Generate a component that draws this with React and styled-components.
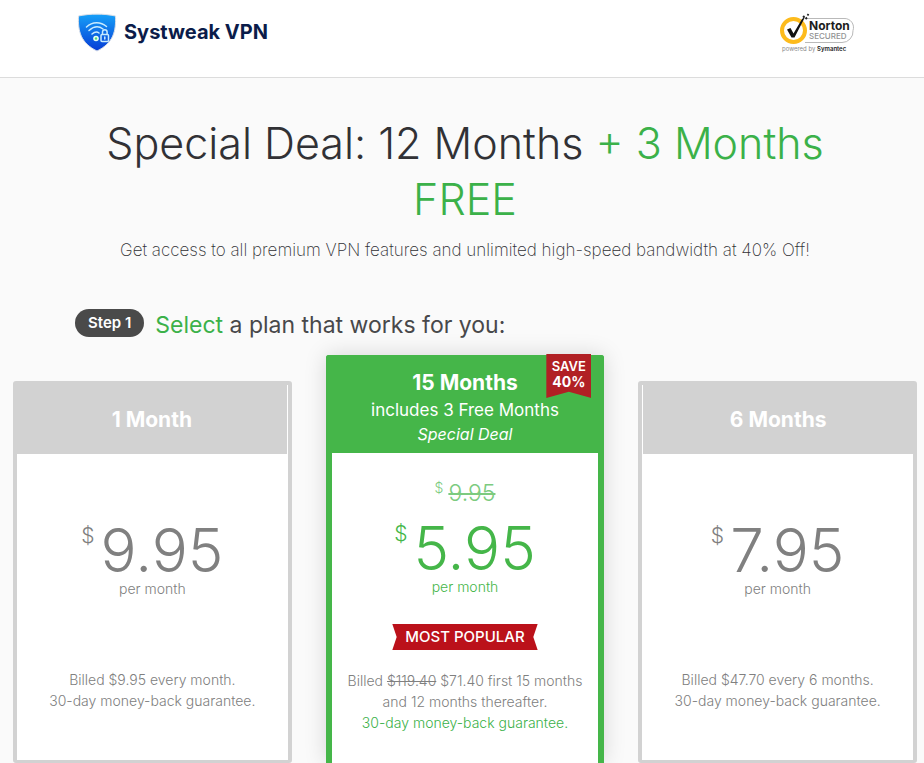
import React from "react";
import styled, { createGlobalStyle, css } from "styled-components";

const GlobalStyle = createGlobalStyle`
  *, *::before, *::after { box-sizing: border-box; }
  body {
    margin: 0;
    background: #fafafa;
    color: #313135;
    font-family: Inter, "Open Sans", sans-serif;
  }
  h1, h2, h3, p { margin: 0; }
`;

const Header = styled.header`
  display: flex;
  align-items: flex-start;
  justify-content: space-between;
  height: 78px;
  padding: 13px 68px 0 77px;
  background: #fff;
  border-bottom: 1px solid #dcdcdc;
`;

const Brand = styled.a`
  display: flex;
  align-items: flex-start;
  gap: 7px;
  color: #0b1c4a;
  font-size: 20px;
  font-weight: 700;
  line-height: 38px;
  text-decoration: none;
  white-space: nowrap;
`;

const Main = styled.main`
  padding: 37px 7px 0 13px;
`;

const Title = styled.h1`
  max-width: 780px;
  margin: 0 auto;
  font-size: 43px;
  font-weight: 300;
  line-height: 56px;
  text-align: center;
`;

const Green = styled.span`
  color: #3bb149;
`;

const Subtitle = styled.p`
  margin-top: 10px;
  font-size: 17px;
  font-weight: 200;
  line-height: 26px;
  text-align: center;
`;

const StepRow = styled.div`
  display: flex;
  align-items: flex-start;
  gap: 11px;
  margin: 46px 0 0 62px;
`;

const StepBadge = styled.span`
  padding: 0 13px;
  border-radius: 14px;
  background: #4a4a4a;
  color: #fff;
  font-size: 15px;
  font-weight: 600;
  line-height: 28px;
`;

const StepTitle = styled.h2`
  color: #48484a;
  font-size: 23px;
  font-weight: 400;
  line-height: 32px;
`;

const Plans = styled.section`
  display: grid;
  grid-template-columns: repeat(3, minmax(0, 1fr));
  align-items: start;
  gap: 34px;
  margin-top: 14px;
`;

const Card = styled.article`
  position: relative;
  margin-top: 26px;
  border: 4px solid #d2d2d2;
  border-bottom-width: 3px;
  border-radius: 3px;
  background: #fff;
  color: #808080;
  text-align: center;
  ${(p) =>
    p.$featured &&
    css`
      margin-top: 0;
      border: 6px solid #45b649;
      border-bottom: 0;
      border-radius: 3px 3px 0 0;
      color: #45b649;
      box-shadow: 0 0 22px rgba(0, 0, 0, 0.15);
    `}
`;

const CardHead = styled.header`
  display: flex;
  flex-direction: column;
  align-items: center;
  justify-content: center;
  height: ${(p) => (p.$featured ? 92 : 69)}px;
  background: ${(p) => (p.$featured ? "#45b649" : "#d2d2d2")};
  color: #fff;
  ${(p) => p.$seam === "right" && "border-right: 1px solid #fff;"}
  ${(p) => p.$seam === "left" && "border-left: 1px solid #fff;"}
`;

const PlanName = styled.h3`
  font-size: 21px;
  font-weight: 700;
  line-height: 28px;
`;

const PlanExtra = styled.p`
  font-size: 17px;
  font-weight: 400;
  line-height: 26px;
`;

const PlanDeal = styled.p`
  font-size: 16px;
  font-style: italic;
  font-weight: 400;
  line-height: 22px;
`;

const SaveTag = styled.div`
  position: absolute;
  top: -7px;
  right: 7px;
  width: 45px;
  height: 44px;
  padding-top: 5px;
  background: #b12024;
  clip-path: polygon(0 0, 100% 0, 100% 100%, 50% 86%, 0 100%);
  color: #fff;
  font-size: 13px;
  font-weight: 600;
  line-height: 15px;
`;

const SavePercent = styled.strong`
  display: block;
  font-size: 14px;
  font-weight: 700;
`;

const CardBody = styled.div`
  display: flex;
  flex-direction: column;
  align-items: center;
  height: ${(p) => (p.$featured ? 310 : 306)}px;
  padding-top: ${(p) => (p.$featured ? 24 : 66)}px;
`;

const OldPrice = styled.div`
  display: flex;
  align-items: flex-start;
  gap: 5px;
  height: 41px;
  color: #7ccb7f;
  font-size: 23px;
  font-weight: 300;
  line-height: 32px;
`;

const OldSign = styled.span`
  font-size: 14px;
  line-height: 22px;
`;

const Price = styled.div`
  display: flex;
  align-items: flex-start;
  gap: 6px;
  font-size: 60px;
  font-weight: 300;
  line-height: 60px;
`;

const Sign = styled.span`
  font-size: 21px;
  font-weight: 300;
  line-height: 32px;
`;

const Per = styled.p`
  font-size: 14px;
  font-weight: 300;
  line-height: 18px;
`;

const Popular = styled.div`
  margin-top: 28px;
  padding: 0 13px;
  background: #bb111a;
  clip-path: polygon(0 0, 100% 0, 97% 50%, 100% 100%, 0 100%, 3% 50%);
  color: #fff;
  font-size: 15px;
  font-weight: 500;
  line-height: 26px;
`;

const Terms = styled.p`
  margin-top: ${(p) => (p.$featured ? 20 : 71)}px;
  color: #808080;
  font-size: 14px;
  font-weight: 300;
  line-height: 21px;
`;

const ShieldLogo = () => (
  <svg width="40" height="40" viewBox="0 0 40 40" aria-hidden="true">
    <defs>
      <linearGradient id="shield" x1="0" y1="0" x2="0" y2="1">
        <stop offset="0" stopColor="#16a0f8" />
        <stop offset="1" stopColor="#063bd5" />
      </linearGradient>
    </defs>
    <path d="M1.500 3C13 .5 27 .5 38.500 3c.6 15-2 27-18.500 35C3.500 30 .9 18 1.500 3Z" fill="url(#shield)" stroke="#d8dee8" />
    <g fill="none" stroke="#c8ebff" strokeWidth="1.500" strokeLinecap="round">
      <path d="M9.500 14c6-5.500 14-5.500 20-.5M12 17.500c5-4.500 10-4.500 14-1.500M15 21c3-2.500 5-2.500 7-1" />
      <rect x="24" y="21.500" width="7.500" height="7" rx="1" />
      <path d="M25.500 21v-2a2.300 2.300 0 0 1 4.600 0v2M27.800 24v2" />
    </g>
    <circle cx="19" cy="25.500" r="2.800" fill="#e9fff1" />
    <circle cx="19" cy="25.500" r="1.200" fill="#53d77b" />
  </svg>
);

const NortonLogo = () => (
  <svg width="76" height="42" viewBox="0 0 76 42" role="img" aria-label="Norton Secured, powered by Symantec">
    <path d="M26 5.500h38a9 9 0 0 1 9 12v0a11 11 0 0 1-11 12H25" fill="#fff" stroke="#b9b9b9" />
    <circle cx="13.500" cy="17.500" r="11.500" fill="#fff" stroke="#fdbb1c" strokeWidth="4" />
    <path d="M7 16.500l3.500-1.500 3 5.500L22 6l3-2-2.500 5-8 15.500h-3Z" fill="#111" />
    <path d="M23 4.500l1.500-1.500M25.500 6l1.500-1.500M27.500 2.500l1-1.500" stroke="#222" strokeWidth="1.800" />
    <text x="29" y="17" fontSize="12" fontWeight="700" fill="#1d1d1d">Norton</text>
    <text x="29" y="26" fontSize="8" fontWeight="500" fill="#929292">SECURED</text>
    <text x="2" y="38" fontSize="6" fill="#888">
      powered by <tspan fontWeight="600" fill="#222">Symantec</tspan>
    </text>
  </svg>
);

function PriceBlock({ amount }) {
  return (
    <>
      <Price>
        <Sign>$</Sign>
        <span>{amount}</span>
      </Price>
      <Per>per month</Per>
    </>
  );
}

function BasicPlan({ name, amount, billing, seam }) {
  return (
    <Card>
      <CardHead $seam={seam}>
        <PlanName>{name}</PlanName>
      </CardHead>
      <CardBody>
        <PriceBlock amount={amount} />
        <Terms>
          {billing}
          <br />
          30-day money-back guarantee.
        </Terms>
      </CardBody>
    </Card>
  );
}

export default function App() {
  return (
    <>
      <GlobalStyle />
      <Header>
        <Brand href="#">
          <ShieldLogo />
          Systweak VPN
        </Brand>
        <NortonLogo />
      </Header>
      <Main>
        <Title>
          Special Deal: 12 Months <Green>+ 3 Months FREE</Green>
        </Title>
        <Subtitle>
          Get access to all premium VPN features and unlimited high-speed bandwidth at 40% Off!
        </Subtitle>
        <StepRow>
          <StepBadge>Step 1</StepBadge>
          <StepTitle>
            <Green>Select</Green> a plan that works for you:
          </StepTitle>
        </StepRow>
        <Plans>
          <BasicPlan name="1 Month" amount="9.95" billing="Billed $9.95 every month." seam="right" />
          <Card $featured>
            <CardHead $featured>
              <PlanName>15 Months</PlanName>
              <PlanExtra>includes 3 Free Months</PlanExtra>
              <PlanDeal>Special Deal</PlanDeal>
            </CardHead>
            <SaveTag>
              SAVE
              <SavePercent>40%</SavePercent>
            </SaveTag>
            <CardBody $featured>
              <OldPrice>
                <OldSign>$</OldSign>
                <s>9.95</s>
              </OldPrice>
              <PriceBlock amount="5.95" />
              <Popular>MOST POPULAR</Popular>
              <Terms $featured>
                Billed <s>$119.40</s> $71.40 first 15 months
                <br />
                and 12 months thereafter.
                <br />
                <Green>30-day money-back guarantee.</Green>
              </Terms>
            </CardBody>
          </Card>
          <BasicPlan name="6 Months" amount="7.95" billing="Billed $47.70 every 6 months." seam="left" />
        </Plans>
      </Main>
    </>
  );
}
